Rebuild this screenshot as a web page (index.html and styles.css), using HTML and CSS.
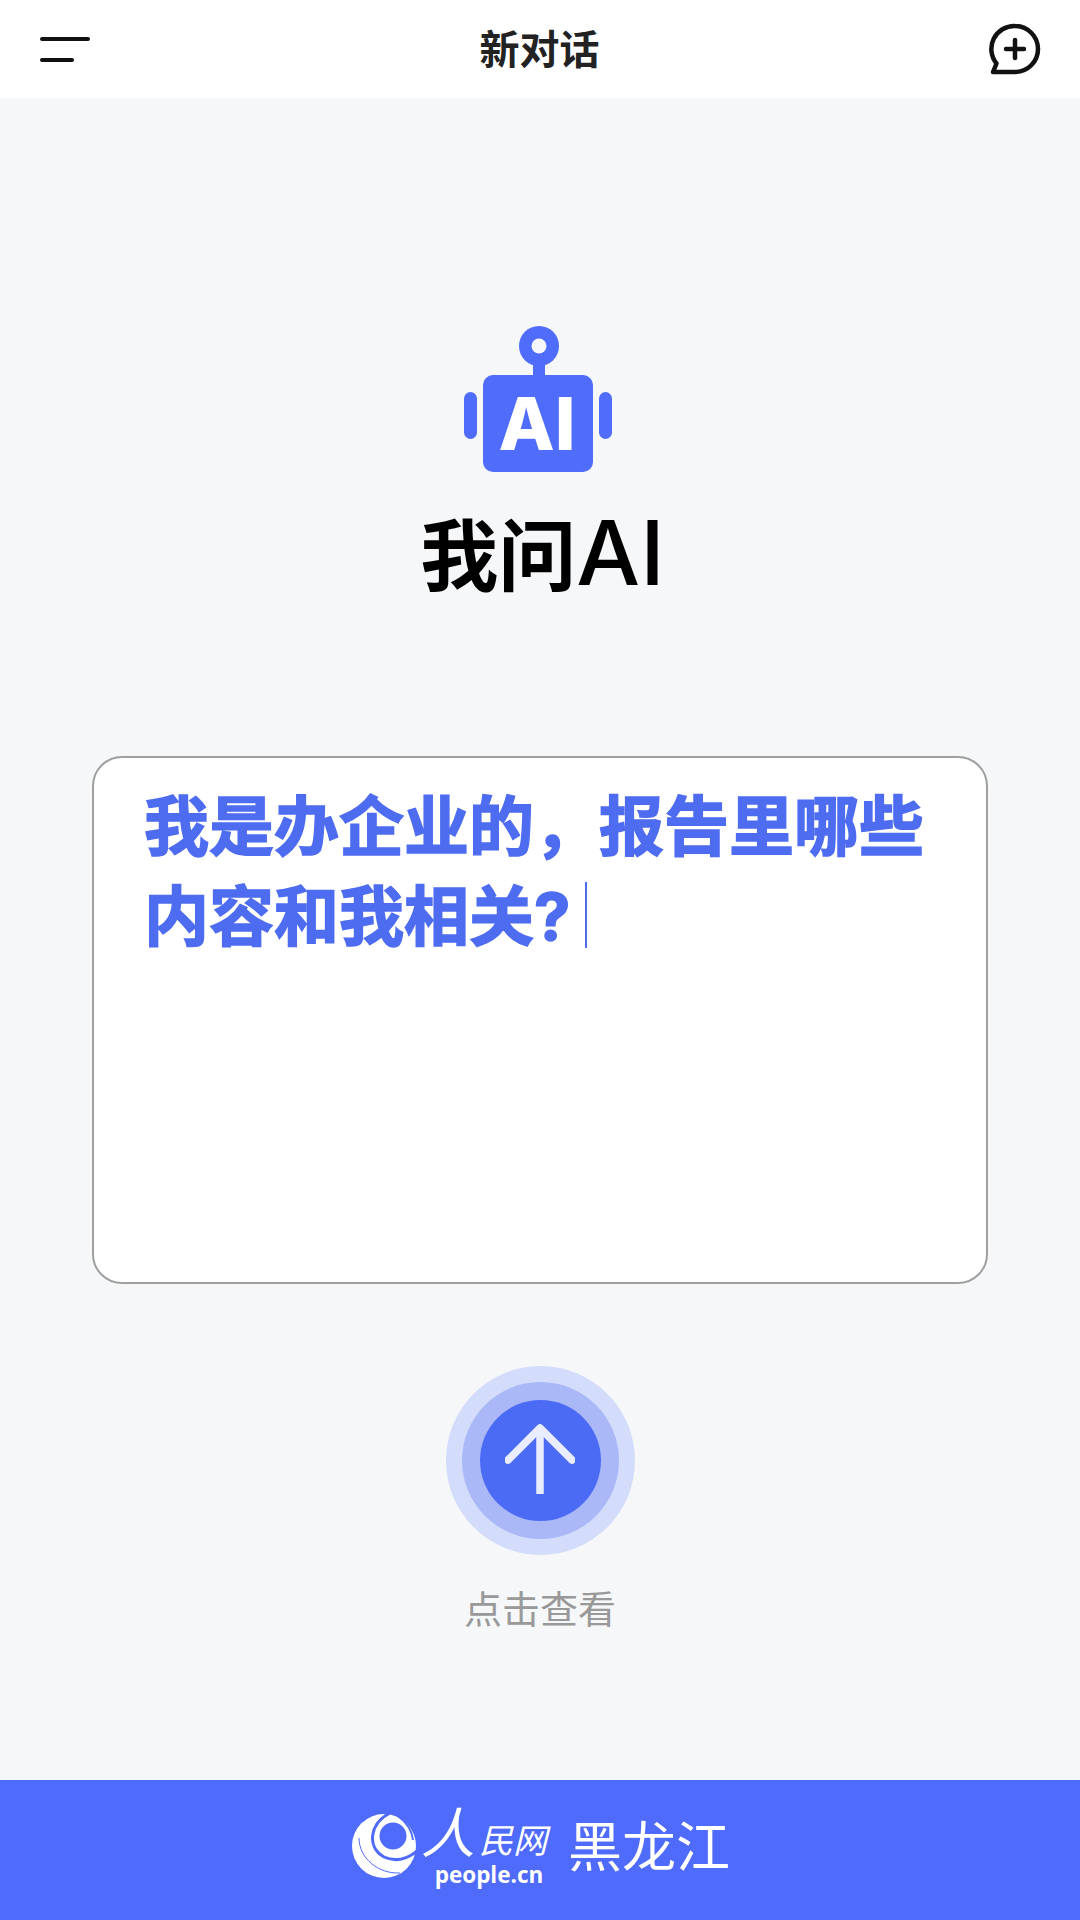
FILE: index.html
```html
<!DOCTYPE html>
<html lang="zh-CN">
<head>
    <meta charset="UTF-8">
    <meta name="viewport" content="width=device-width, initial-scale=1.0">
    <title>我问AI</title>
    <link rel="stylesheet" href="styles.css">
</head>
<body>
    <div class="page">
        <!-- Top bar -->
        <header class="topbar">
            <div class="menu-icon"><span></span><span class="short"></span></div>
            <h2>新对话</h2>
            <svg class="new-chat" width="52" height="52" viewBox="0 0 52 52" fill="none" stroke="#111" stroke-width="4.5" stroke-linecap="round" stroke-linejoin="round">
                <path d="M26 3a23 23 0 0 1 0 46H4l3.500-8.500A23 23 0 0 1 26 3z"/>
                <path d="M17 26h18M26 17v18"/>
            </svg>
        </header>

        <main class="main">
            <!-- Robot logo -->
            <svg class="robot" width="150" height="150" viewBox="0 0 150 150">
                <circle cx="75" cy="21" r="20" fill="#4f6cfb"/>
                <circle cx="75" cy="21" r="7.500" fill="#f5f7fa"/>
                <rect x="69" y="36" width="12" height="20" fill="#4f6cfb"/>
                <rect x="19" y="50" width="110" height="97" rx="10" fill="#4f6cfb"/>
                <rect x="0" y="67" width="13" height="47" rx="6.500" fill="#4f6cfb"/>
                <rect x="135" y="67" width="13" height="47" rx="6.500" fill="#4f6cfb"/>
                <text x="73" y="125" text-anchor="middle" class="robot-text">AI</text>
            </svg>
            <h1>我问<span class="latin">AI</span></h1>

            <!-- Question box -->
            <div class="question">
                <p>我是办企业的，报告里哪些内容和我相关?<span class="caret"></span></p>
            </div>

            <!-- Send button -->
            <div class="send">
                <div class="ring-outer">
                    <div class="ring-mid">
                        <div class="ring-inner">
                            <svg width="70" height="74" viewBox="0 0 70 74" fill="none" stroke="#e9eeff" stroke-width="7.500" stroke-linecap="round" stroke-linejoin="round">
                                <path d="M3 36L35 4l32 32"/>
                                <path d="M35 4v66" stroke-linecap="butt"/>
                            </svg>
                        </div>
                    </div>
                </div>
                <div class="send-label">点击查看</div>
            </div>
        </main>

        <!-- Footer logo -->
        <footer class="footer">
            <svg class="globe" width="64" height="64" viewBox="0 0 64 64" fill="none">
                <circle cx="32" cy="32" r="32" fill="#fff"/>
                <path d="M38 -1C18 9 14 33 32 43C43 48 55 45 65 37" stroke="#4f6bfb" stroke-width="3"/>
                <circle cx="41" cy="22" r="13.500" fill="#4f6bfb"/>
                <path d="M46 2C54 8 60 16 61 26" stroke="#4f6bfb" stroke-width="2"/>
                <path d="M7 24C7 44 26 60 48 59" stroke="#4f6bfb" stroke-width="1"/>
            </svg>
            <div class="brand">
                <div class="brand-cn"><span class="ren">人</span>民网</div>
                <div class="brand-en">people.cn</div>
            </div>
            <div class="region">黑龙江</div>
        </footer>
    </div>
</body>
</html>
```
FILE: styles.css
```css
* {
    box-sizing: border-box;
}

body {
    margin: 0;
    padding: 0;
    font-family: "Noto Sans CJK SC", "Noto Sans", sans-serif;
    background-color: #f5f7f9;
}

.page {
    width: 1080px;
    height: 1920px;
    display: flex;
    flex-direction: column;
}

/* Top bar */
.topbar {
    height: 98px;
    background-color: #fff;
    display: flex;
    align-items: center;
    justify-content: space-between;
    padding: 0 39px 0 40px;
}

.topbar h2 {
    margin: 0 0 4px;
    font-size: 40px;
    font-weight: 700;
    color: #222;
}

.menu-icon {
    width: 50px;
    display: flex;
    flex-direction: column;
    gap: 17px;
}

.menu-icon span {
    display: block;
    height: 4px;
    width: 50px;
    background-color: #111;
    border-radius: 2px;
}

.menu-icon .short {
    width: 34px;
}

/* Main */
.main {
    flex: 1;
    display: flex;
    flex-direction: column;
    align-items: center;
    padding-top: 227px;
}

.robot {
    display: block;
    margin-right: 2px;
}

.robot-text {
    font-family: "Inter", "Liberation Sans", sans-serif;
    font-size: 73px;
    font-weight: 800;
    fill: #fff;
}

.main h1 {
    margin: 26px 0 0 5px;
    font-size: 78px;
    font-weight: 700;
    line-height: 100px;
    color: #000;
}

.latin {
    font-family: "Inter", sans-serif;
    font-size: 90px;
    font-weight: 500;
}

.question {
    width: 896px;
    height: 528px;
    margin-top: 153px;
    padding: 24px 50px;
    background-color: #fff;
    border: 2px solid #a0a0a0;
    border-radius: 30px;
}

.question p {
    margin: 0;
    font-family: "Inter", "Noto Sans CJK SC", sans-serif;
    font-size: 65px;
    font-weight: 700;
    -webkit-text-stroke: 1.500px #4e6cf0;
    line-height: 90px;
    color: #4e6cf0;
}

.caret {
    display: inline-block;
    width: 2px;
    height: 66px;
    margin-left: 15px;
    background-color: #4e6cf0;
    vertical-align: -8px;
}

/* Send button */
.send {
    margin-top: 82px;
    display: flex;
    flex-direction: column;
    align-items: center;
}

.ring-outer,
.ring-mid,
.ring-inner {
    border-radius: 50%;
    display: flex;
    align-items: center;
    justify-content: center;
}

.ring-outer {
    width: 189px;
    height: 189px;
    background-color: #d4dcfb;
}

.ring-mid {
    width: 157px;
    height: 157px;
    background-color: #aab8f8;
}

.ring-inner {
    width: 121px;
    height: 121px;
    background-color: #4b6bf5;
}

.send-label {
    margin-top: 25px;
    font-size: 38px;
    line-height: 54px;
    color: #999;
}

/* Footer */
.footer {
    height: 140px;
    background-color: #4f6bfb;
    display: flex;
    align-items: center;
    padding: 0 0 10px 352px;
    color: #fff;
}

.globe {
    display: block;
    margin-top: 2px;
}

.brand {
    margin-left: 5px;
    width: 124px;
}

.brand-cn {
    font-size: 34px;
    line-height: 50px;
    font-style: italic;
    white-space: nowrap;
}

.ren {
    font-size: 54px;
    margin-right: 4px;
}

.brand-en {
    font-family: "Open Sans", sans-serif;
    font-size: 22.500px;
    font-weight: 700;
    line-height: 22px;
    text-align: center;
    margin-left: 12px;
    white-space: nowrap;
}

.region {
    margin-left: 23px;
    font-size: 54px;
    font-weight: 400;
    line-height: 60px;
    margin-bottom: 2px;
}
```
